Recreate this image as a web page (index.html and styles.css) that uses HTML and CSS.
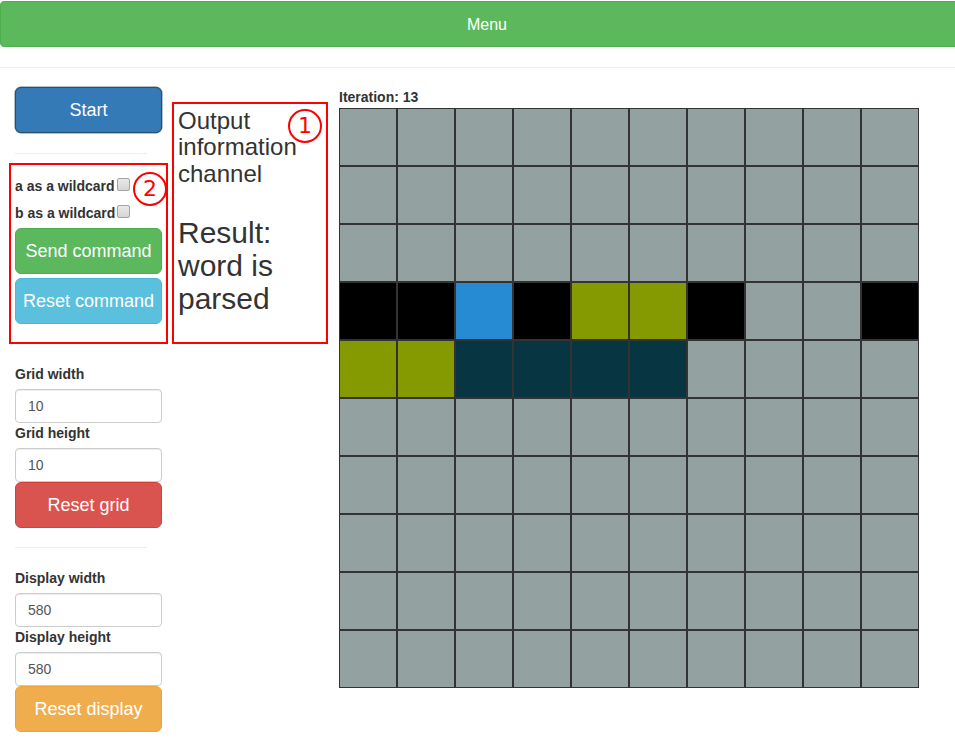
FILE: index.html
```html
<!DOCTYPE html>
<html>
<head>
<meta charset="utf-8">
<title>Grid parser</title>
<link rel="stylesheet" href="styles.css">
</head>
<body>
<div class="topbar"><button class="btn btn-lg btn-success menu">Menu</button></div>
<hr class="sep">
<div class="main">
  <div class="side">
    <button class="btn btn-lg btn-primary start">Start</button>
    <hr class="side-hr">
    <div class="wild">
      <label class="chk">a as a wildcard<input type="checkbox"></label>
      <label class="chk">b as a wildcard<input type="checkbox"></label>
    </div>
    <button class="btn btn-lg btn-success send">Send command</button>
    <button class="btn btn-lg btn-info reset-cmd">Reset command</button>
    <div class="fields grid-fields">
      <label class="lbl">Grid width</label>
      <input class="form-control" value="10">
      <label class="lbl">Grid height</label>
      <input class="form-control" value="10">
      <button class="btn btn-lg btn-danger">Reset grid</button>
    </div>
    <hr class="side-hr2">
    <div class="fields">
      <label class="lbl">Display width</label>
      <input class="form-control" value="580">
      <label class="lbl">Display height</label>
      <input class="form-control" value="580">
      <button class="btn btn-lg btn-warning">Reset display</button>
    </div>
  </div>
  <div class="output">
    <h3>Output information channel</h3>
    <h2>Result: word is parsed</h2>
  </div>
  <div class="board">
    <div class="iter">Iteration: 13</div>
    <div class="grid">
      <div class="c g"></div><div class="c g"></div><div class="c g"></div><div class="c g"></div><div class="c g"></div><div class="c g"></div><div class="c g"></div><div class="c g"></div><div class="c g"></div><div class="c g"></div>
      <div class="c g"></div><div class="c g"></div><div class="c g"></div><div class="c g"></div><div class="c g"></div><div class="c g"></div><div class="c g"></div><div class="c g"></div><div class="c g"></div><div class="c g"></div>
      <div class="c g"></div><div class="c g"></div><div class="c g"></div><div class="c g"></div><div class="c g"></div><div class="c g"></div><div class="c g"></div><div class="c g"></div><div class="c g"></div><div class="c g"></div>
      <div class="c k"></div><div class="c k"></div><div class="c b"></div><div class="c k"></div><div class="c o"></div><div class="c o"></div><div class="c k"></div><div class="c g"></div><div class="c g"></div><div class="c k"></div>
      <div class="c o"></div><div class="c o"></div><div class="c d"></div><div class="c d"></div><div class="c d"></div><div class="c d"></div><div class="c g"></div><div class="c g"></div><div class="c g"></div><div class="c g"></div>
      <div class="c g"></div><div class="c g"></div><div class="c g"></div><div class="c g"></div><div class="c g"></div><div class="c g"></div><div class="c g"></div><div class="c g"></div><div class="c g"></div><div class="c g"></div>
      <div class="c g"></div><div class="c g"></div><div class="c g"></div><div class="c g"></div><div class="c g"></div><div class="c g"></div><div class="c g"></div><div class="c g"></div><div class="c g"></div><div class="c g"></div>
      <div class="c g"></div><div class="c g"></div><div class="c g"></div><div class="c g"></div><div class="c g"></div><div class="c g"></div><div class="c g"></div><div class="c g"></div><div class="c g"></div><div class="c g"></div>
      <div class="c g"></div><div class="c g"></div><div class="c g"></div><div class="c g"></div><div class="c g"></div><div class="c g"></div><div class="c g"></div><div class="c g"></div><div class="c g"></div><div class="c g"></div>
      <div class="c g"></div><div class="c g"></div><div class="c g"></div><div class="c g"></div><div class="c g"></div><div class="c g"></div><div class="c g"></div><div class="c g"></div><div class="c g"></div><div class="c g"></div>
    </div>
  </div>
  <div class="note-box box1"></div>
  <div class="note-box box2"></div>
  <div class="note-num num1">1</div>
  <div class="note-num num2">2</div>
</div>
</body>
</html>
```

FILE: styles.css
```css
html, body {
  overflow: hidden;
}
body {
  margin: 0;
  font-family: "Liberation Sans", Arial, Helvetica, sans-serif;
  font-size: 14px;
  line-height: 1.42857;
  color: #333;
  background: #fff;
}
.topbar {
  padding-top: 1px;
}
.btn {
  display: block;
  box-sizing: border-box;
  font-family: inherit;
  text-align: center;
  white-space: nowrap;
  border: 1px solid transparent;
  color: #fff;
  cursor: pointer;
  margin: 0;
}
.btn-lg {
  height: 46px;
  padding: 10px 0;
  font-size: 18px;
  line-height: 24px;
  border-radius: 6px;
  width: 147px;
}
.btn-primary { background: #337ab7; border-color: #2e6da4; }
.btn-success { background: #5cb85c; border-color: #4cae4c; }
.btn-info { background: #5bc0de; border-color: #46b8da; }
.btn-danger { background: #d9534f; border-color: #d43f3a; }
.btn-warning { background: #f0ad4e; border-color: #eea236; }

.menu {
  width: 974px;
  font-size: 16px;
  padding-top: 11px;
  padding-bottom: 9px;
  border-radius: 4px 0 0 4px;
  border-bottom-color: #4cae4c;
}
.sep {
  margin: 20px 0 19px;
  border: 0;
  border-top: 1px solid #eee;
}
.main {
  position: relative;
  display: flex;
  align-items: flex-start;
  padding-left: 15px;
}
.side {
  width: 147px;
  display: flex;
  flex-direction: column;
}
.start {
  border-color: #284f72;
  box-shadow: 0 0 0 0.5px #6b7f90;
}
.side-hr {
  width: 132px;
  margin: 20px 0 22px;
  border: 0;
  border-top: 1px solid #eee;
}
.wild {
  display: flex;
  flex-direction: column;
  gap: 7px;
}
.chk {
  display: flex;
  align-items: center;
  font-weight: bold;
  line-height: 20px;
  height: 20px;
}
.chk input {
  appearance: none;
  -webkit-appearance: none;
  box-sizing: border-box;
  width: 13px;
  height: 13px;
  margin: 0 0 3px 2px;
  border: 1px solid #a3a3a3;
  border-radius: 2px;
  background: linear-gradient(#e9e9e9, #d6d6d6);
}
.send { margin-top: 5px; }
.reset-cmd { margin-top: 4px; }
.fields {
  display: flex;
  flex-direction: column;
}
.grid-fields { margin-top: 40px; }
.lbl {
  display: block;
  font-weight: bold;
  line-height: 20px;
  margin-bottom: 5px;
}
.form-control {
  box-sizing: border-box;
  width: 147px;
  height: 34px;
  padding: 6px 12px;
  font-family: inherit;
  font-size: 14px;
  color: #555;
  border: 1px solid #ccc;
  border-radius: 4px;
  margin: 0;
  box-shadow: inset 0 1px 1px rgba(0,0,0,.075);
}
.side-hr2 {
  width: 132px;
  margin: 19px 0 20px;
  border: 0;
  border-top: 1px solid #eee;
}
.output {
  width: 150px;
  margin-left: 16px;
}
.output h3 {
  font-size: 24px;
  font-weight: normal;
  line-height: 1.1;
  margin: 21px 0 0;
}
.output h2 {
  font-size: 30px;
  font-weight: normal;
  line-height: 1.1;
  margin: 29px 0 0;
}
.board {
  margin-left: 11px;
}
.iter {
  font-weight: bold;
  line-height: 20px;
  margin-bottom: 1px;
}
.grid {
  display: grid;
  grid-template-columns: repeat(10, 58px);
  grid-auto-rows: 58px;
  width: 580px;
}
.c {
  box-sizing: border-box;
  border: 1px solid #333;
}
.g { background: #93a1a1; }
.k { background: #000; }
.b { background: #268bd2; }
.o { background: #859900; }
.d { background: #073642; }

.note-box {
  position: absolute;
  box-sizing: border-box;
  border: 2px solid #f00;
}
.box1 { left: 172px; top: 15px; width: 156px; height: 242px; }
.box2 { left: 9px; top: 76px; width: 159px; height: 181px; }
.note-num {
  position: absolute;
  box-sizing: border-box;
  width: 34px;
  height: 34px;
  border: 2px solid #f00;
  border-radius: 50%;
  background: #fff;
  color: #f00;
  font-family: "DejaVu Sans", sans-serif;
  font-size: 22px;
  line-height: 30px;
  text-align: center;
}
.num1 { left: 288px; top: 22px; }
.num2 { left: 133px; top: 85px; }
```
